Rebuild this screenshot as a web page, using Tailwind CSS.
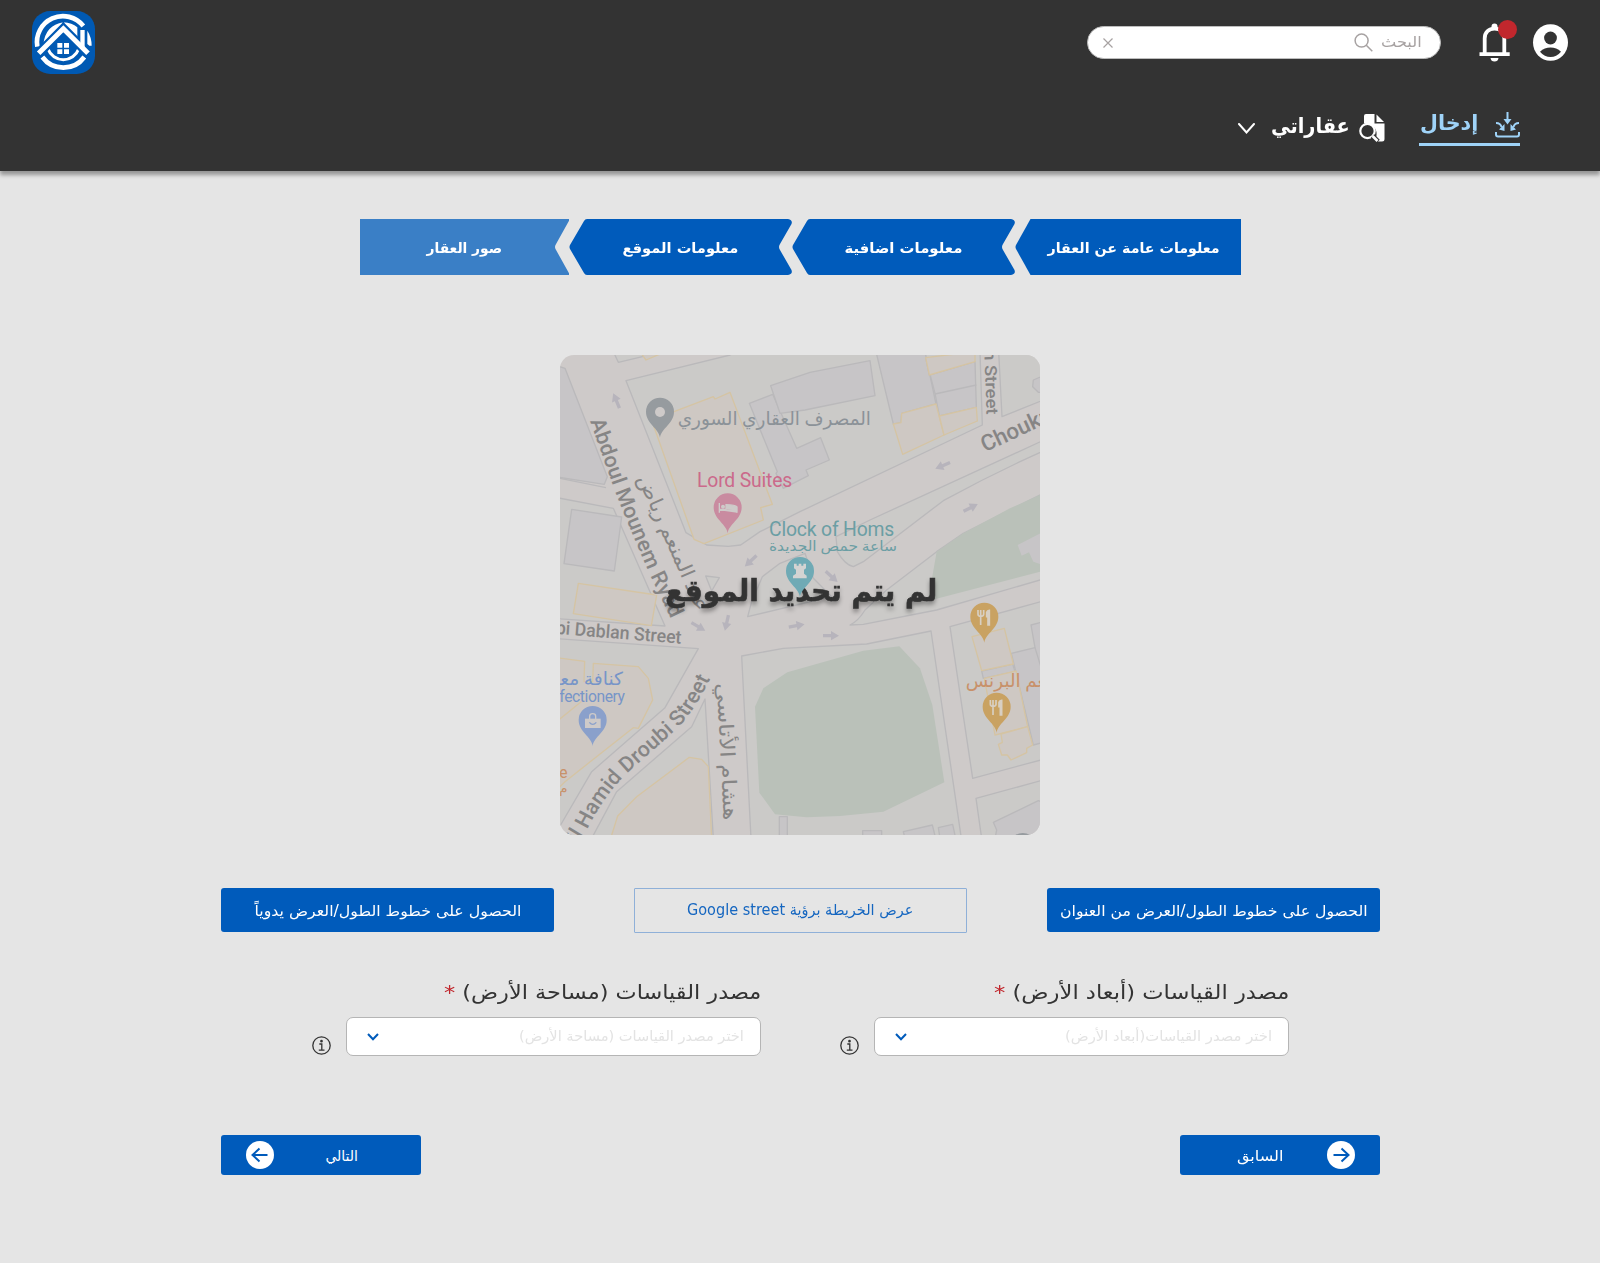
<!DOCTYPE html>
<html lang="ar" dir="rtl">
<head>
<meta charset="utf-8">
<title>معلومات الموقع</title>
<script src="https://cdn.jsdelivr.net/npm/@tailwindcss/browser@4"></script>
</head>
<body class="bg-[#e5e5e5] w-[1600px] h-[1263px] overflow-hidden font-['DejaVu_Sans',sans-serif] text-[#333]">

<header class="h-[171px] bg-[#333] shadow-[0_4px_4px_rgba(0,0,0,0.35)] relative">
  <div class="h-[85px] px-8 flex items-center">
    <svg class="w-[36px] h-[37px]" viewBox="0 0 36 37"><ellipse cx="18.500" cy="18.500" rx="17.500" ry="18.300" fill="#fff"/><circle cx="18.500" cy="14" r="6.400" fill="#333"/><path d="M8 27.700Q12.500 23.500 18.500 23.500T29 27.700Q24.500 33 18.500 33T8 27.700Z" fill="#333"/></svg>
    <div class="relative ms-[22px] w-[31px] h-[39px]">
      <svg class="w-[31px] h-[39px]" viewBox="0 0 31 39"><path d="M12.500 3.500Q12.500 0.500 15.500 0.500T18.500 3.500V5H12.500Z" fill="#fff"/><path d="M5.700 31V15.500C5.700 9 10 5.700 15.500 5.700S25.300 9 25.300 15.500V31" fill="none" stroke="#fff" stroke-width="3.800"/><path d="M0.500 29.300H30.700V33H0.500ZM11.500 35H19.500Q19 38.500 15.500 38.500T11.500 35Z" fill="#fff"/></svg>
      <span class="absolute left-[19px] -top-[3px] size-[19px] rounded-full bg-[#c1272d]"></span>
    </div>
    <div class="ms-[38px] w-[354px] h-[33px] rounded-full bg-white border border-[#bdbdbd] flex items-center ps-[18px] pe-[15px]">
      <span class="w-[41px] shrink-0 text-[15px] text-[#a7a2a2] whitespace-nowrap"><span class="inline-block origin-right" data-w="41">البحث</span></span>
      <svg class="ms-[8px] size-[19px]" viewBox="0 0 19 19" fill="none" stroke="#a7a2a2" stroke-width="1.500"><circle cx="7.600" cy="7.600" r="6.500"/><path d="M12.300 12.300L18.300 18.300"/></svg>
      <svg class="ms-auto size-[10px]" viewBox="0 0 10 10" stroke="#a7a2a2" stroke-width="1.200"><path d="M0.500 0.500L9.500 9.500M9.500 0.500L0.500 9.500"/></svg>
    </div>
    <svg class="ms-auto size-[63px]" viewBox="96 33 189 189">
      <rect x="96" y="33" width="189" height="189" rx="55" fill="#0059b3"/>
      <g fill="none" stroke="#fff">
        <path d="M112 140A78 78 0 0 1 250 78" stroke-width="14"/>
        <path d="M127 171A78 78 0 0 0 253 171" stroke-width="14"/>
        <path d="M144 147A49 49 0 0 0 236 147" stroke-width="9"/>
      </g>
      <path d="M130 134Q136 75 190 67Q216 69 232 82V120L190 80Z" fill="#fff"/>
      <path d="M104 172L190 86L276 172" fill="none" stroke="#0059b3" stroke-width="28"/>
      <path d="M190 60V90" stroke="#0059b3" stroke-width="5"/>
      <path d="M116 160L190 86L264 160" fill="none" stroke="#fff" stroke-width="15"/>
      <path d="M241 90H254V146L241 134ZM262 92Q275 112 275 137H268L262 132Z" fill="#fff"/>
      <path d="M172 129H187V143H172ZM192 129H207V143H192ZM172 148H187V162H172ZM192 148H207V162H192Z" fill="#fff"/>
    </svg>
  </div>
  <nav class="px-20 pt-[26px] flex items-start">
    <a class="w-[101px] h-[35px] border-b-[3px] border-[#9fd3f8] text-[#9fd3f8] flex items-start">
      <svg class="mt-[1px] w-[25px] h-[26px]" viewBox="0 0 25 26" fill="none" stroke="#9fd3f8" stroke-width="2"><path d="M1 20V22.500Q1 24.500 3 24.500H22Q24 24.500 24 22.500V20M12.500 0V8M1 11C4.500 11 6 13 6.500 15M24 11C20.500 11 19 13 18.500 15"/><path d="M8.500 7H16.500L12.500 12.500ZM4 17.500L9.500 19V12ZM21 17.500L15.500 19V12Z" fill="#9fd3f8" stroke="none"/></svg>
      <span class="ms-[17px] w-[58px] shrink-0 text-[21px] leading-[24px] font-bold whitespace-nowrap"><span class="inline-block origin-right" data-w="58">إدخال</span></span>
    </a>
    <a class="ms-[34px] text-white flex items-start">
      <svg class="mt-[3px] w-[26px] h-[28px] shrink-0" viewBox="0 0 26 28"><path d="M7 0H15.500V9.500H25.500V25Q25.500 27.500 23 27.500H19L17 24C19 18 17 10 5 9V2Q5 0 7 0Z" fill="#fff"/><path d="M17.500 0.500V8H25Z" fill="#fff"/><circle cx="8.500" cy="17" r="7.200" fill="#333" stroke="#fff" stroke-width="2.200"/><path d="M13.500 22L19 27.500" stroke="#333" stroke-width="5"/><path d="M13.500 22L18.500 27" stroke="#fff" stroke-width="2.600"/></svg>
      <span class="ms-[9px] mt-[3px] w-[79px] shrink-0 text-[21px] leading-[24px] font-bold whitespace-nowrap"><span class="inline-block origin-right" data-w="79">عقاراتي</span></span>
      <svg class="ms-[16px] mt-[12px] w-[17px] h-[11px]" viewBox="0 0 17 11" fill="none" stroke="#fff" stroke-width="2" stroke-linecap="round"><path d="M1 1L8.500 9.500L16 1"/></svg>
    </a>
  </nav>
</header>

<main>
  <ol class="mt-[48px] mr-[359px] flex h-[56px] text-[14px] font-bold text-white">
    <li class="relative w-[226px] flex items-center justify-center ps-[0px] pe-[0px]">
      <svg class="absolute inset-0 w-[226px] h-[56px]" viewBox="0 0 226 56"><path d="M226 0H15.500L1 26Q0 28 1 30L15.500 56H226Z" fill="#005bbb"/></svg>
      <span class="relative left-[6px] top-px whitespace-nowrap" data-w="172">معلومات عامة عن العقار</span>
    </li>
    <li class="relative w-[223px] flex items-center justify-center">
      <svg class="absolute inset-0 w-[223px] h-[56px]" viewBox="0 0 223 56"><path d="M18 0H219Q224 1 222.500 5L211 25Q209 28 211 31L222.500 51Q224 55 219 56H18Q16 56 15 54L1 30Q0 28 1 26L15 2Q16 0 18 0Z" fill="#005bbb"/></svg>
      <span class="relative top-px whitespace-nowrap" data-w="118">معلومات اضافية</span>
    </li>
    <li class="relative w-[223px] flex items-center justify-center">
      <svg class="absolute inset-0 w-[223px] h-[56px]" viewBox="0 0 223 56"><path d="M18 0H219Q224 1 222.500 5L211 25Q209 28 211 31L222.500 51Q224 55 219 56H18Q16 56 15 54L1 30Q0 28 1 26L15 2Q16 0 18 0Z" fill="#005bbb"/></svg>
      <span class="relative top-px whitespace-nowrap" data-w="116">معلومات الموقع</span>
    </li>
    <li class="relative w-[209px] flex items-center justify-center">
      <svg class="absolute inset-y-0 right-0 w-[210px] h-[56px]" viewBox="0 0 210 56"><path d="M1 0H211L196.500 26Q195.500 28 196.500 30L211 56H1Z" fill="#3a7fc6"/></svg>
      <span class="relative top-px whitespace-nowrap" data-w="76">صور العقار</span>
    </li>
  </ol>

  <div class="mt-[80px] mx-auto w-[480px] h-[480px] rounded-[14px] overflow-hidden" dir="ltr">
    <svg class="w-[480px] h-[480px]" viewBox="30 30 1440 1440" font-family="Roboto, 'DejaVu Sans', sans-serif">
      <defs>
        <path id="ryad" d="M120 228L190 425Q240 555 300 690L372 840"/>
        <path id="droubi" d="M84 1496L118 1440Q160 1360 222 1293L375 1157Q440 1094 500 960"/>
        <path id="pin" d="M0 78C-3 50-42 36-42 0A42 42 0 1 1 42 0C42 36 3 50 0 78Z"/>
        <path id="arrow" d="M-24-5H0V-14L24 0L0 14V5H-24Z" fill="#b7b4bc"/>
      </defs>
      <rect x="0" y="0" width="1500" height="1500" fill="#cecac9"/>
      <!-- city blocks -->
      <g fill="#cbcac8" stroke="#bab9bb" stroke-width="4" stroke-linejoin="round">
        <path d="M20 62L45 70L172 395L163 418L20 396Z" fill="#c7c5c7"/>
        <path d="M20 398L168 428" fill="none"/>
        <path d="M20 458L190 490L345 843L20 821Z"/>
        <path d="M20 881L445 911L345 1088L125 1280L20 1460Z"/>
        <path d="M465 1062L425 1145L200 1340L125 1480H490Z"/>
        <path d="M575 933L700 910L950 897L1143 858L1234 1480H603Z"/>
        <path d="M1200 845L1480 768V1243L1268 1300Z"/>
        <path d="M1278 1360L1480 1305V1480H1295Z"/>
        <path d="M228 107L540 30L560 20H1290L1297 240L750 500L630 560L572 600L535 604L470 600L408 563Z"/>
        <path d="M190 20L205 52L290 32V20Z"/>
        <path d="M1346 20L1356 215L1480 165V20Z"/>
        <path d="M1480 286L960 525L858 575L862 620Q885 660 910 665L940 650L1180 467Q1330 385 1480 318Z"/>
        <path d="M900 840Q925 828 945 795L1010 735L1160 620L1240 565L1480 445V702L1160 795L940 838Z"/>
        <path d="M593 815L605 770L637 695L690 655L765 625L790 700L845 755L760 775Z"/>
        <path d="M467 693L508 698L485 738Z"/>
      </g>
      <!-- parks -->
      <g fill="#bac1b9">
        <path d="M615 1085L640 1030L712 982L940 917L1048 904L1110 970L1147 1080L1183 1312L1000 1400L870 1413L770 1417L675 1408L628 1343Z"/>
        <path d="M1160 620L1240 565L1380 490L1480 445V678L1165 760L1134 768Z"/>
      </g>
      <!-- buildings -->
      <g fill="#c7c5c7" stroke="#bab9bb" stroke-width="4" stroke-linejoin="round">
        <path d="M65 493L215 516L193 678L42 656Z"/>
        <path d="M598 175L668 148L740 310L812 278L838 345L768 375L775 392L700 430L678 385L682 380Z"/>
        <path d="M662 122L780 82L960 47L975 152L765 195L690 205Z"/>
        <path d="M978 20H1125L1158 177L1055 205L1053 233L1030 237Z"/>
        <path d="M1127 38L1138 90L1275 50L1279 187L1168 213L1155 145Z"/>
        <path d="M1155 147L1279 120" fill="none"/>
        <path d="M1480 92L1450 105L1448 125L1465 142H1480Z"/>
        <path d="M1480 560L1403 600L1415 632L1437 622L1450 650L1480 660Z" stroke="none"/>
        <path d="M1480 830L1443 840L1455 908L1384 925L1395 970L1450 1200L1480 1192Z"/>
        <path d="M1455 908L1480 990" fill="none"/>
        <path d="M1330 1432L1465 1367L1480 1372V1480H1335L1340 1455Z"/>
        <path d="M1295 978L1388 957L1395 980L1300 1000Z"/>
        <path d="M688 1480V1415H712V1480M938 1480V1457H995V1480M1065 1480L1060 1460L1147 1440L1157 1480M1170 1480L1165 1448L1208 1438L1217 1480"/>
      </g>
      <g fill="#cec8c3" stroke="#d5c4a3" stroke-width="4" stroke-linejoin="round">
        <path d="M310 240L372 200L490 155L495 162L540 142L667 478L632 488L640 525L462 596L432 583Z"/>
        <path d="M85 715L320 750L304 842L70 806Z"/>
        <path d="M20 938L104 949L102 1010H128L130 955L265 965L295 1000L308 1065L265 1150L250 1148L45 1310L20 1335Z"/>
        <path d="M182 1480L203 1413L260 1355L418 1237L455 1243L475 1265L485 1480Z"/>
        <path d="M20 1130L100 1065" fill="none"/>
        <path d="M270 20L288 45L335 25V20Z"/>
        <path d="M1030 237L1053 233L1055 205L1158 177L1182 270L1058 328Z"/>
        <path d="M1127 38L1138 90L1275 50V20Z"/>
        <path d="M1168 213L1279 187L1282 228L1182 270Z"/>
        <path d="M1266 875L1363 850L1390 957L1295 977Z"/>
        <path d="M1303 1000L1398 978L1433 1145L1335 1170Z"/>
        <path d="M1353 1167L1433 1145L1448 1200L1430 1210V1223L1383 1245L1372 1230H1355L1345 1198L1357 1192Z"/>
      </g>
      <!-- traffic direction -->
      <use href="#arrow" transform="translate(199 167) rotate(-113)"/>
      <use href="#arrow" transform="translate(602 648) rotate(137)"/>
      <use href="#arrow" transform="translate(1178 362) rotate(157)"/>
      <use href="#arrow" transform="translate(1262 488) rotate(-27)"/>
      <use href="#arrow" transform="translate(845 695) rotate(42)"/>
      <use href="#arrow" transform="translate(445 845) rotate(30)"/>
      <use href="#arrow" transform="translate(530 834) rotate(103)"/>
      <use href="#arrow" transform="translate(740 842) rotate(-10)"/>
      <use href="#arrow" transform="translate(843 872)"/>
      <!-- street names -->
      <g fill="#868585" font-weight="500" font-size="64" stroke="#cecac9" stroke-width="5" paint-order="stroke">
        <text textLength="642"><textPath href="#ryad">Abdoul Mounem Ryad</textPath></text>
        <text><textPath href="#droubi" textLength="640">il Hamid Droubi Street</textPath></text>
        <text transform="translate(393 896) rotate(4.500)" font-size="55" text-anchor="end" textLength="378" lengthAdjust="spacingAndGlyphs">bi Dablan Street</text>
        <text transform="translate(1303 16) rotate(88)" font-size="50" textLength="193" lengthAdjust="spacingAndGlyphs">n Street</text>
        <text transform="translate(1305 322) rotate(-25)" font-size="67">Choukri</text>
        <g font-weight="400" font-size="60">
          <text transform="translate(262 400) rotate(66)" textLength="440" lengthAdjust="spacingAndGlyphs">عبد المنعم رياض</text>
          <text transform="translate(500 1015) rotate(87)" textLength="412" lengthAdjust="spacingAndGlyphs">هشام الأتاسي</text>
        </g>
      </g>
      <text x="346" y="769" font-family="'DejaVu Sans', sans-serif" font-weight="700" font-size="90" fill="#333" stroke="#333" stroke-width="2" textLength="816" lengthAdjust="spacingAndGlyphs" class="drop-shadow-[0_10px_6px_rgba(0,0,0,0.35)]">لم يتم تحديد الموقع</text>
      <!-- places -->
      <g font-size="58">
        <text x="383" y="239" font-size="56" fill="#8b9298" textLength="580" lengthAdjust="spacingAndGlyphs">المصرف العقاري السوري</text>
        <text x="441" y="427" fill="#cb6a8b" textLength="286">Lord Suites</text>
        <text x="657" y="573" fill="#6b9ea4" textLength="376">Clock of Homs</text>
        <text x="657" y="617" font-size="42" fill="#6b9ea4" textLength="384" lengthAdjust="spacingAndGlyphs">ساعة حمص الجديدة</text>
        <text x="-12" y="1019" font-size="54" fill="#7795c8" textLength="231" lengthAdjust="spacingAndGlyphs">كنافة معن</text>
        <text x="28" y="1070" font-size="47" fill="#7795c8" textLength="197">fectionery</text>
        <text x="1247" y="1026" font-size="56" fill="#c8916a" textLength="286" lengthAdjust="spacingAndGlyphs">طعم البرنس</text>
        <text x="28" y="1298" font-size="47" fill="#c8916a">e</text>
        <text x="28" y="1345" font-size="40" fill="#c8916a">م</text>
      </g>
      <use href="#pin" x="330" y="200" fill="#969b9f"/><circle cx="330" cy="201" r="15" fill="#cecac9"/>
      <use href="#pin" x="533" y="487" fill="#c98ba0"/><path d="M508 474V503M508 496H561V503M561 496V486Q556 479 528 479V493H508" fill="#cecac9" stroke="#cecac9" stroke-width="4"/><circle cx="519" cy="485" r="6" fill="#cecac9"/>
      <use href="#pin" x="750" y="678" fill="#6faab5"/><path d="M732 656H740V662H746V656H754V662H760V656H768V670L762 674V686L770 692V700H729V692L738 686V674L732 670Z" fill="#d3d3d2"/>
      <use href="#pin" x="128" y="1125" fill="#8aa0cb"/><path d="M105 1121H152V1149H105Z" fill="#cecac9"/><path d="M119 1122V1114Q119 1106 128 1106T137 1114V1122" fill="none" stroke="#cecac9" stroke-width="4"/><path d="M118 1132Q128 1144 139 1132" fill="none" stroke="#8aa0cb" stroke-width="4"/>
      <use href="#pin" x="1303" y="815" fill="#c9a262"/>
      <use href="#pin" x="1340" y="1085" fill="#c9a262"/>
      <g id="fork" fill="none" stroke="#d8cfc2" stroke-width="5"><path d="M1284 795V808Q1284 814 1292 814T1301 808V795M1292 795V840"/><path d="M1310 815V802Q1312 796 1318 796V840H1314V815Z" fill="#d8cfc2"/></g>
      <use href="#fork" x="37" y="270"/>
      <use href="#pin" x="1418" y="1506" fill="#969b9f"/>
    </svg>
  </div>

  <div class="mt-[53px] pr-[220px] pl-[221px] flex justify-between text-[15px]">
    <button class="w-[333px] h-[44px] rounded-[3px] bg-[#005bbb] text-white flex items-center justify-center whitespace-nowrap"><span class="relative top-px" data-w="308">الحصول على خطوط الطول/العرض من العنوان</span></button>
    <button class="w-[333px] h-[45px] border border-[#8fb0d8] text-[#1566c0] flex items-center justify-center whitespace-nowrap rounded-[1px]"><span data-w="226">عرض الخريطة برؤية Google street</span></button>
    <button class="w-[333px] h-[44px] rounded-[3px] bg-[#005bbb] text-white flex items-center justify-center whitespace-nowrap"><span class="relative top-px" data-w="267">الحصول على خطوط الطول/العرض يدوياً</span></button>
  </div>

  <div class="mt-[44px] pr-[311px] flex gap-[79px]">
    <section class="w-[449px]">
      <label class="block h-[40px] leading-[30px] text-[20px] whitespace-nowrap"><span class="inline-block origin-right" data-w="295">مصدر القياسات (أبعاد الأرض) <b class="text-[#c1272d] font-normal">*</b></span></label>
      <div class="flex items-end justify-between">
        <div class="w-[415px] h-[39px] rounded-[7px] bg-white border border-[#b5b5b5] flex items-center justify-between ps-[16px] pe-[20px]">
          <span class="w-[208px] shrink-0 text-[14px] text-[#e3e3e3] whitespace-nowrap"><span class="inline-block origin-right" data-w="207">اختر مصدر القياسات(أبعاد الأرض)</span></span>
          <svg class="w-[12px] h-[8px] shrink-0" viewBox="0 0 12 8" fill="none" stroke="#005bbb" stroke-width="2"><path d="M1 1L6 6.300L11 1"/></svg>
        </div>
        <svg class="mb-px size-[19px]" viewBox="0 0 19 19" fill="none" stroke="#333" stroke-width="1.300"><circle cx="9.500" cy="9.500" r="8.700"/><path d="M7.300 8H9.800V14M6.800 14.200H12.500"/><circle cx="9.500" cy="5.200" r="0.700" fill="#333"/></svg>
      </div>
    </section>
    <section class="w-[449px]">
      <label class="block h-[40px] leading-[30px] text-[20px] whitespace-nowrap"><span class="inline-block origin-right" data-w="317">مصدر القياسات (مساحة الأرض) <b class="text-[#c1272d] font-normal">*</b></span></label>
      <div class="flex items-end justify-between">
        <div class="w-[415px] h-[39px] rounded-[7px] bg-white border border-[#b5b5b5] flex items-center justify-between ps-[16px] pe-[20px]">
          <span class="w-[226px] shrink-0 text-[14px] text-[#e3e3e3] whitespace-nowrap"><span class="inline-block origin-right" data-w="225">اختر مصدر القياسات (مساحة الأرض)</span></span>
          <svg class="w-[12px] h-[8px] shrink-0" viewBox="0 0 12 8" fill="none" stroke="#005bbb" stroke-width="2"><path d="M1 1L6 6.300L11 1"/></svg>
        </div>
        <svg class="mb-px size-[19px]" viewBox="0 0 19 19" fill="none" stroke="#333" stroke-width="1.300"><circle cx="9.500" cy="9.500" r="8.700"/><path d="M7.300 8H9.800V14M6.800 14.200H12.500"/><circle cx="9.500" cy="5.200" r="0.700" fill="#333"/></svg>
      </div>
    </section>
  </div>

  <div class="mt-[79px] pr-[220px] pl-[221px] flex justify-between text-[14px] text-white">
    <button class="w-[200px] h-[40px] rounded-[3px] bg-[#005bbb] flex items-center ps-[25px]">
      <svg class="size-[28px]" viewBox="0 0 28 28"><circle cx="14" cy="14" r="14" fill="#fff"/><path d="M6.500 14H21.500M14.500 7.500L21.500 14L14.500 20.500" fill="none" stroke="#005bbb" stroke-width="2"/></svg>
      <span class="relative top-px ms-[44px] inline-block origin-right whitespace-nowrap" data-w="46">السابق</span>
    </button>
    <button class="w-[200px] h-[40px] rounded-[3px] bg-[#005bbb] flex items-center justify-between ps-[63px] pe-[25px]">
      <span class="relative top-px inline-block origin-right whitespace-nowrap" data-w="33">التالي</span>
      <svg class="size-[28px]" viewBox="0 0 28 28"><circle cx="14" cy="14" r="14" fill="#fff"/><path d="M21.500 14H6.500M13.500 7.500L6.500 14L13.500 20.500" fill="none" stroke="#005bbb" stroke-width="2"/></svg>
    </button>
  </div>
</main>

<script>
  // Keep each label at its design width, whatever size its font gives it.
  const fit = el => { if (el.offsetWidth) el.style.transform = `scaleX(${el.dataset.w / el.offsetWidth})`; };
  const watcher = new ResizeObserver(entries => entries.forEach(e => fit(e.target)));
  document.querySelectorAll('[data-w]').forEach(el => { fit(el); watcher.observe(el); });
  window.addEventListener('load', () => document.querySelectorAll('[data-w]').forEach(fit));
</script>
</body>
</html>
